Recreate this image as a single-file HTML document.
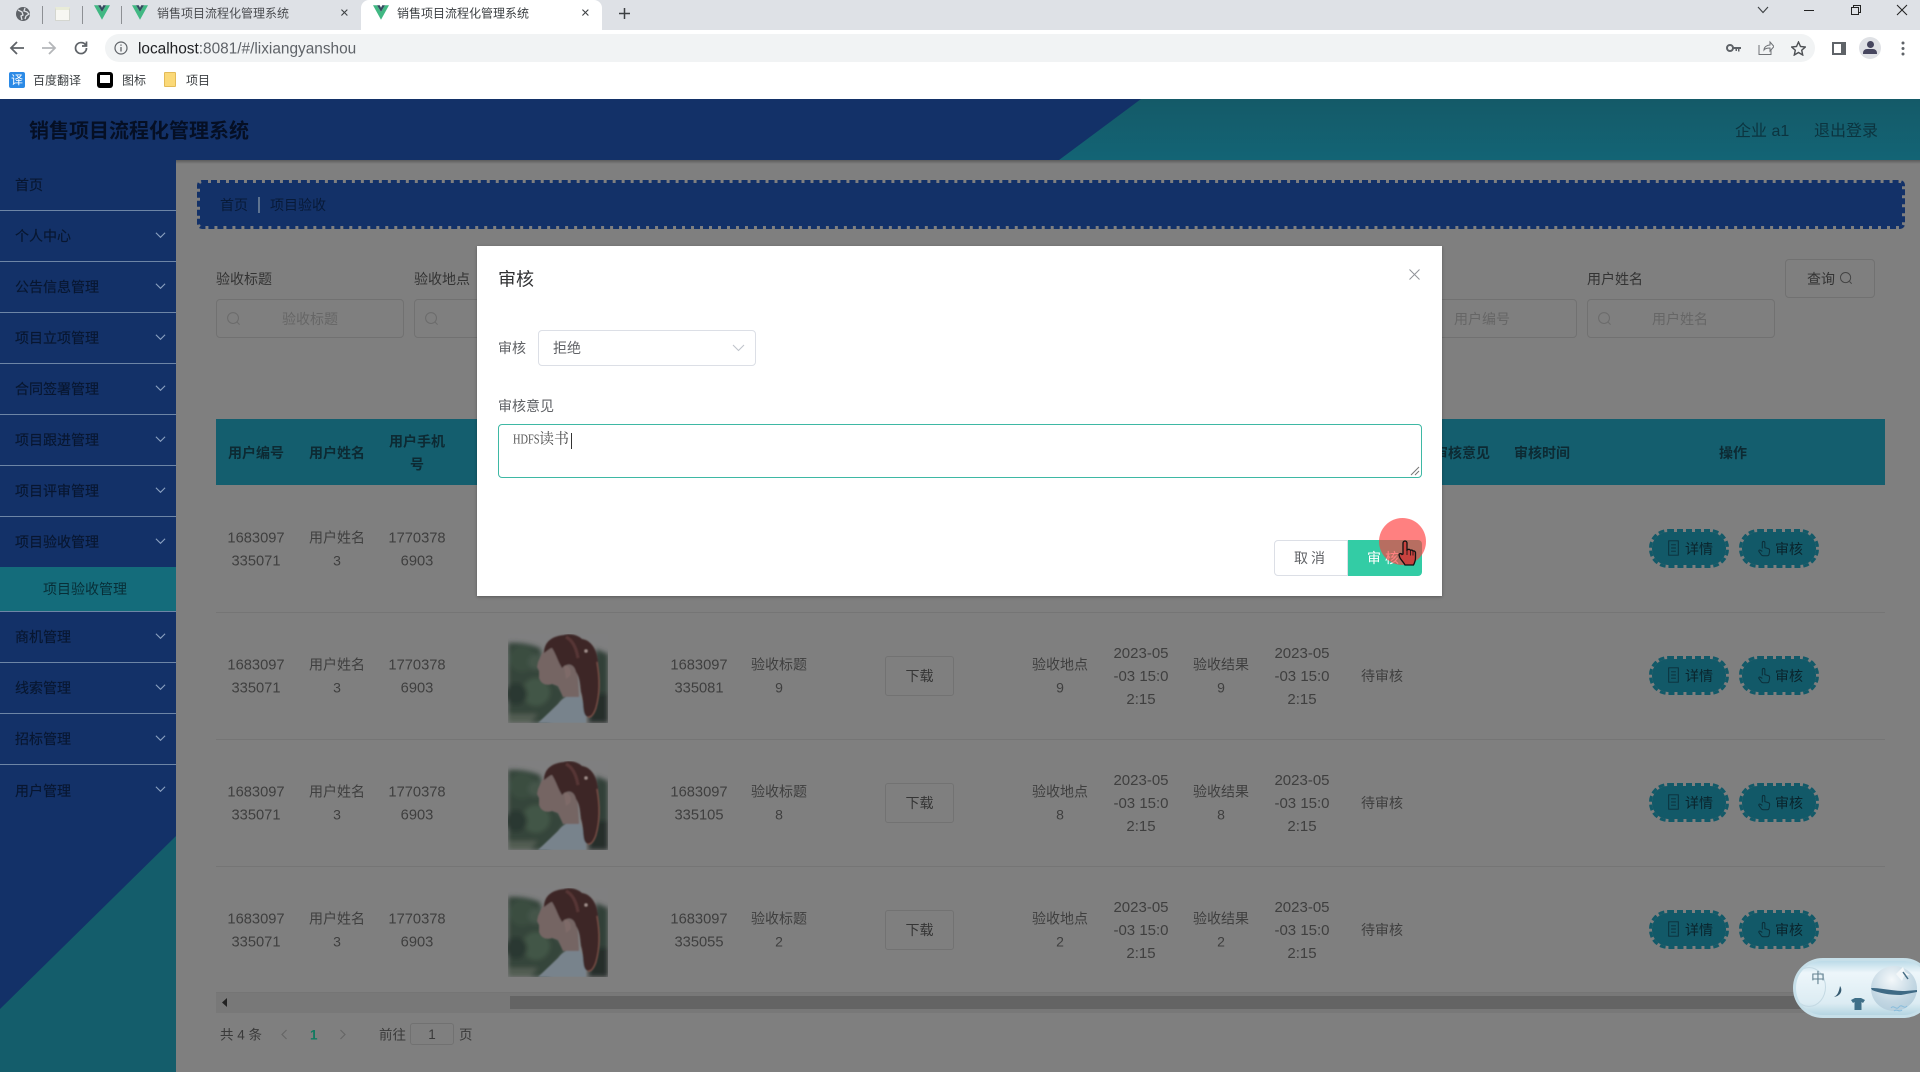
<!DOCTYPE html>
<html lang="zh"><head><meta charset="utf-8"><title>销售项目流程化管理系统</title>
<style>
*{box-sizing:border-box;margin:0;padding:0}
html,body{width:1920px;height:1072px;overflow:hidden;background:#7f7f7f;font-family:"Liberation Sans","Noto Sans CJK SC",sans-serif}
.a{position:absolute}
.t{position:absolute;white-space:nowrap;transform:translateY(calc(-50% + 1.500px));line-height:1.2}
.c{position:absolute;white-space:nowrap;transform:translate(-50%,calc(-50% + 1.500px));text-align:center;line-height:23px;font-size:14.7px;color:#3f3f3f}
.z{font-size:14px;transform:translate(-50%,calc(-50% + .5px))}
.d{font-size:15px;transform:translate(-50%,calc(-50% + .5px))}
.th{font-weight:700;color:#0d2a33;font-size:14px}
.si{position:absolute;left:0;width:176px;height:51px;border-bottom:1px solid #6d85a6}
.si span{position:absolute;left:15px;top:50%;transform:translateY(-50%);font-size:14px;color:#081730;white-space:nowrap;-webkit-text-stroke:.15px #081730}
.si svg{position:absolute;left:155px;top:20px}
.inp{position:absolute;height:39px;border:1px solid #717171;border-radius:4px}
.dl{position:absolute;left:885px;width:69px;height:40px;border:1px solid #727272;border-radius:3px;font-size:14px;color:#353535;text-align:center;line-height:39px}
.btn{position:absolute;width:80px;height:39px;border:3px dashed #125968;border-radius:19px;background:#125968;background-clip:padding-box;color:#0a242c;font-size:14px;line-height:35px;padding-left:33px}
.btn svg{position:absolute;left:15px;top:8px}
.hr{position:absolute;left:216px;width:1669px;height:1px;background:#757575}
</style></head><body>
<svg width="0" height="0" style="position:absolute"><defs>
<symbol id="v" viewBox="0 0 20 18"><path d="M0 0h5l5 8 5-8h5L10 18z" fill="#41b883"/><path d="M5 0h3.500L10 3l1.500-3H15l-5 8z" fill="#34495e"/></symbol>
<symbol id="chev" viewBox="0 0 12 8"><path d="M1 1.500l5 5 5-5" fill="none" stroke="#8aa0c0" stroke-width="1.200"/></symbol>
<symbol id="mag" viewBox="0 0 16 16"><circle cx="7.500" cy="7.500" r="5.800" fill="none" stroke="#6b6b6b" stroke-width="1.100"/><path d="M12 12l2.500 2.500" stroke="#6b6b6b" stroke-width="1.100"/></symbol>
<symbol id="mag2" viewBox="0 0 16 16"><circle cx="7.500" cy="7.500" r="5.800" fill="none" stroke="#444" stroke-width="1.100"/><path d="M12 12l2.500 2.500" stroke="#444" stroke-width="1.100"/></symbol>
<symbol id="doc" viewBox="0 0 16 20"><path d="M2 1h12v18H2zM5 6h6M5 10h6M5 14h6" fill="none" stroke="#0c2f3a" stroke-width="1.200"/></symbol>
<symbol id="hand" viewBox="0 0 16 20"><path d="M6 10V3.200a1.500 1.500 0 013 0V9l4 1.200c1.300.4 1.800 1.400 1.600 2.800l-.6 3.500c-.2 1.200-1 2-2.200 2H7c-1 0-1.800-.5-2.300-1.300L2 13.500c-.6-1 .6-2.200 1.700-1.500L6 13.500" fill="none" stroke="#0c2f3a" stroke-width="1.200"/></symbol>
<filter id="bl" x="-5%" y="-5%" width="110%" height="110%"><feGaussianBlur stdDeviation=".8"/></filter>
<filter id="bl2" x="-10%" y="-10%" width="120%" height="120%"><feGaussianBlur stdDeviation="2.500"/></filter>
<clipPath id="cp"><rect width="100" height="89"/></clipPath>
<symbol id="girl" viewBox="0 0 100 89" preserveAspectRatio="none">
<g clip-path="url(#cp)">
<rect width="100" height="89" fill="#7f7f80"/>
<g filter="url(#bl2)">
<path d="M0 9C10 8 22 10 32 14L40 40 60 60 40 89H0z" fill="#34453a"/>
<circle cx="14" cy="25" r="13" fill="#3a4d40"/><circle cx="28" cy="58" r="14" fill="#435646"/><circle cx="8" cy="60" r="11" fill="#2a3830"/><circle cx="28" cy="28" r="8" fill="#445449"/>
<path d="M0 80H30L22 89H0z" fill="#535d53"/>
<path d="M88 15L100 20V89H80z" fill="#323f38"/>
<path d="M88 60H100V89H80z" fill="#262f2a"/>
</g>
<g filter="url(#bl)">
<path d="M50 70L30 89H78C78 80 76 70 72 62 64 60 56 62 50 70z" fill="#78838c"/>
<path d="M38 14C33 20 32 24 30 28L29 33 31 37 31 44C33 50 38 52 44 50L50 52 55 63 71 63 70 45 68 30 56 10z" fill="#756564"/>
<path d="M36 19C36 8 44 2 56 1 62-1 70 1 74 5 82 6 89 14 90 28 92 44 92 60 88 74 86 80 82 84 78 82 74 78 76 66 73 58 72 50 72 44 68 38 66 30 60 28 54 34 50 28 48 20 44 14 42 14 38 18 36 19z" fill="#3e2625"/>
<path d="M89 28C92 44 92 60 88 74 86 80 83 84 80 83" fill="none" stroke="#7a5046" stroke-width="1.300"/>
<path d="M58 3C64 6 68 12 70 24" stroke="#573634" stroke-width="3" fill="none"/>
<circle cx="78" cy="17" r="1.500" fill="#a89490"/>
<path d="M56 32a5 7 0 016 10l-4 3z" fill="#7e6b68"/>
</g></g>
</symbol></defs></svg>

<!-- browser chrome -->
<div class="a" style="left:0;top:0;width:1920px;height:30px;background:#dee1e6"></div>
<svg class="a" style="left:15px;top:6px" width="16" height="16" viewBox="0 0 16 16"><circle cx="8" cy="8" r="7" fill="#5f6368"/><path d="M3 4l4 2 1 3-2 1 1 4M10 2l-1 3 3 1 2 2-3 2-1 3" fill="none" stroke="#dee1e6" stroke-width="1.300"/></svg>
<div class="a" style="left:42px;top:6px;width:1px;height:18px;background:#8d9094"></div>
<div class="a" style="left:55px;top:7px;width:15px;height:14px;background:#f7f7f2;border:1px solid #d4d6d0;border-top:3px solid #e8ebd8"></div>
<div class="a" style="left:82px;top:6px;width:1px;height:18px;background:#8d9094"></div>
<svg class="a" style="left:94px;top:5px" width="16" height="15"><use href="#v"/></svg>
<div class="a" style="left:121px;top:6px;width:1px;height:18px;background:#8d9094"></div>
<svg class="a" style="left:132px;top:5px" width="16" height="15"><use href="#v"/></svg>
<div class="t" style="left:157px;top:12px;font-size:12px;color:#4a4c50">销售项目流程化管理系统</div>
<div class="t" style="left:340px;top:12px;font-size:15px;color:#3c4043">×</div>
<div class="a" style="left:361px;top:0;width:241px;height:30px;background:#fff;border-radius:8px 8px 0 0"></div>
<svg class="a" style="left:373px;top:5px" width="16" height="15"><use href="#v"/></svg>
<div class="t" style="left:397px;top:12px;font-size:12px;color:#3c4043">销售项目流程化管理系统</div>
<div class="t" style="left:581px;top:12px;font-size:15px;color:#3c4043">×</div>
<svg class="a" style="left:618px;top:7px" width="13" height="13"><path d="M6.500 1v11M1 6.500h11" stroke="#3c4043" stroke-width="1.500"/></svg>
<svg class="a" style="left:1756px;top:5px" width="14" height="10"><path d="M2 2l5 5.500L12 2" fill="none" stroke="#3c4043" stroke-width="1.100"/></svg>
<div class="a" style="left:1804px;top:10px;width:10px;height:1px;background:#222"></div>
<svg class="a" style="left:1850px;top:4px" width="12" height="12"><path d="M1.500 3.500h7v7h-7zM3.500 3.500v-2h7v7h-2" fill="none" stroke="#222" stroke-width="1"/></svg>
<svg class="a" style="left:1896px;top:4px" width="12" height="12"><path d="M1 1l10 10M11 1L1 11" stroke="#222" stroke-width="1"/></svg>

<div class="a" style="left:0;top:30px;width:1920px;height:69px;background:#fff"></div>
<svg class="a" style="left:9px;top:40px" width="16" height="16"><path d="M15 8H2M8 2L2 8l6 6" fill="none" stroke="#5f6368" stroke-width="1.800"/></svg>
<svg class="a" style="left:41px;top:40px" width="16" height="16"><path d="M1 8h13M8 2l6 6-6 6" fill="none" stroke="#b4b6b9" stroke-width="1.800"/></svg>
<svg class="a" style="left:73px;top:40px" width="16" height="16"><path d="M13.500 8A5.500 5.500 0 118.500 2.600c2 0 3.200 1 4.500 2.400M13.500 1.500V6H9" fill="none" stroke="#5f6368" stroke-width="1.700"/></svg>
<div class="a" style="left:105px;top:34px;width:1710px;height:28px;background:#f1f3f4;border-radius:14px"></div>
<svg class="a" style="left:114px;top:41px" width="14" height="14"><circle cx="7" cy="7" r="6" fill="none" stroke="#5f6368" stroke-width="1.200"/><path d="M7 6v4.500M7 3.500v1.300" stroke="#5f6368" stroke-width="1.300"/></svg>
<div class="t" style="left:138px;top:47.500px;font-size:15.400px;color:#202124">localhost<span style="color:#5f6368">:8081/#/lixiangyanshou</span></div>
<svg class="a" style="left:1726px;top:43px" width="15" height="10"><circle cx="4" cy="5" r="3" fill="none" stroke="#5f6368" stroke-width="2"/><path d="M7 4h8v2h-1.500v2.500H12V6h-1v2H9.500V6H7z" fill="#5f6368"/></svg>
<svg class="a" style="left:1758px;top:40px" width="16" height="16"><path d="M1 5v9.500h12V10M6 10c0-3 3-5 6-5V2l4 4.500L12 11V8c-2.500 0-5 .5-6 2z" fill="none" stroke="#6f7276" stroke-width="1"/></svg>
<svg class="a" style="left:1791px;top:41px" width="15" height="15"><path d="M7.500 1l2 4.500 4.800.5-3.600 3.200 1 4.800-4.200-2.500-4.200 2.500 1-4.800L.7 6l4.800-.5z" fill="none" stroke="#4d5054" stroke-width="1.400"/></svg>
<div class="a" style="left:1832px;top:42px;width:14px;height:13px;border:2px solid #5f6368;border-right-width:5px"></div>
<div class="a" style="left:1859px;top:37px;width:22px;height:22px;border-radius:50%;background:#dfe1e5;overflow:hidden"><div class="a" style="left:7.500px;top:4px;width:7px;height:7px;border-radius:50%;background:#46465e"></div><div class="a" style="left:4px;top:12px;width:14px;height:5px;border-radius:4px 4px 0 0;background:#46465e"></div></div>
<svg class="a" style="left:1901px;top:41px" width="4" height="15"><circle cx="2" cy="2" r="1.500" fill="#5f6368"/><circle cx="2" cy="7.500" r="1.500" fill="#5f6368"/><circle cx="2" cy="13" r="1.500" fill="#5f6368"/></svg>

<div class="a" style="left:9px;top:72px;width:16px;height:16px;background:#2b8ae6;border-radius:2px;color:#fff;font-size:12px;line-height:16px;text-align:center">译</div>
<div class="t" style="left:33px;top:78.500px;font-size:12px;color:#3c4043">百度翻译</div>
<div class="a" style="left:97px;top:72px;width:16px;height:16px;background:#000;border-radius:3px"><div class="a" style="left:3px;top:3px;width:10px;height:8px;background:#fff"></div></div>
<div class="t" style="left:122px;top:78.500px;font-size:12px;color:#3c4043">图标</div>
<div class="a" style="left:164px;top:72px;width:12px;height:15px;background:#fbd978;border:1px solid #e3bb58;border-radius:1px"></div>
<div class="t" style="left:186px;top:78.500px;font-size:12px;color:#3c4043">项目</div>

<!-- header -->
<div class="a" style="left:0;top:99px;width:1920px;height:61px;background:linear-gradient(#145a68,#136475)"></div>
<svg class="a" style="left:0;top:99px" width="1150" height="61"><path d="M0 0H1141L1059 61H0z" fill="#133168"/></svg>
<div class="a" style="left:0;top:160px;width:1920px;height:4px;background:linear-gradient(#5c5c5c,#7f7f7f)"></div>
<div class="t" style="left:29px;top:129.500px;font-size:20px;font-weight:700;color:#050f24">销售项目流程化管理系统</div>
<div class="t" style="left:1735px;top:129.500px;font-size:16px;color:#0c343f">企业 a1</div>
<div class="t" style="left:1814px;top:129.500px;font-size:16px;color:#0c343f">退出登录</div>

<!-- sidebar -->
<div class="a" style="left:0;top:160px;width:176px;height:912px;background:#133168"></div>
<svg class="a" style="left:0;top:836px" width="176" height="236"><path d="M176 0V236H0V173z" fill="#145d6b"/></svg>
<div class="si" style="top:160px"><span>首页</span></div>
<div class="si" style="top:211px"><span>个人中心</span><svg width="11" height="8"><use href="#chev"/></svg></div>
<div class="si" style="top:262px"><span>公告信息管理</span><svg width="11" height="8"><use href="#chev"/></svg></div>
<div class="si" style="top:313px"><span>项目立项管理</span><svg width="11" height="8"><use href="#chev"/></svg></div>
<div class="si" style="top:364px"><span>合同签署管理</span><svg width="11" height="8"><use href="#chev"/></svg></div>
<div class="si" style="top:415px"><span>项目跟进管理</span><svg width="11" height="8"><use href="#chev"/></svg></div>
<div class="si" style="top:466px"><span>项目评审管理</span><svg width="11" height="8"><use href="#chev"/></svg></div>
<div class="si" style="top:517px;border-bottom:0;height:50px"><span>项目验收管理</span><svg width="11" height="8"><use href="#chev"/></svg></div>
<div class="a" style="left:0;top:567px;width:176px;height:45px;background:#146c7b;border-bottom:1px solid #6d85a6"></div>
<div class="t" style="left:43px;top:587.500px;font-size:14px;color:#082e37">项目验收管理</div>
<div class="si" style="top:612px"><span>商机管理</span><svg width="11" height="8"><use href="#chev"/></svg></div>
<div class="si" style="top:663px"><span>线索管理</span><svg width="11" height="8"><use href="#chev"/></svg></div>
<div class="si" style="top:714px"><span>招标管理</span><svg width="11" height="8"><use href="#chev"/></svg></div>
<div class="si" style="top:765px;border-bottom:0"><span>用户管理</span><svg width="11" height="8"><use href="#chev"/></svg></div>

<!-- breadcrumb -->
<div class="a" style="left:197px;top:180px;width:1708px;height:49px;border:3px dashed #133168;border-radius:5px;background:#133168;background-clip:padding-box"></div>
<div class="t" style="left:220px;top:203.500px;font-size:14px;color:#081a38">首页</div>
<div class="a" style="left:258px;top:197px;width:2px;height:16px;background:#5e7390"></div>
<div class="t" style="left:270px;top:203.500px;font-size:14px;color:#081a38">项目验收</div>

<!-- search -->
<div class="t" style="left:216px;top:278px;font-size:14px;color:#333">验收标题</div>
<div class="inp" style="left:216px;top:299px;width:188px"></div>
<svg class="a" style="left:226px;top:311px" width="15" height="15"><use href="#mag"/></svg>
<div class="c" style="left:310px;top:318px;color:#666;font-size:14px">验收标题</div>
<div class="t" style="left:414px;top:278px;font-size:14px;color:#333">验收地点</div>
<div class="inp" style="left:414px;top:299px;width:188px"></div>
<svg class="a" style="left:424px;top:311px" width="15" height="15"><use href="#mag"/></svg>
<div class="inp" style="left:1388px;top:299px;width:189px"></div>
<div class="c" style="left:1482px;top:318px;color:#666;font-size:14px">用户编号</div>
<div class="t" style="left:1587px;top:278px;font-size:14px;color:#333">用户姓名</div>
<div class="inp" style="left:1587px;top:299px;width:188px"></div>
<svg class="a" style="left:1597px;top:311px" width="15" height="15"><use href="#mag"/></svg>
<div class="c" style="left:1680px;top:318px;color:#666;font-size:14px">用户姓名</div>
<div class="a" style="left:1785px;top:259px;width:90px;height:39px;border:1px solid #717171;border-radius:4px"></div>
<div class="t" style="left:1807px;top:278px;font-size:14px;color:#333">查询</div>
<svg class="a" style="left:1839px;top:271px" width="14" height="14"><use href="#mag2"/></svg>

<!-- table -->
<div class="a" style="left:216px;top:419px;width:1669px;height:66px;background:#145e6e"></div>
<div class="c th" style="left:256px;top:452px">用户编号</div>
<div class="c th" style="left:337px;top:452px">用户姓名</div>
<div class="c th" style="left:417px;top:452px">用户手机<br>号</div>
<div class="c th" style="left:1462px;top:452px">审核意见</div>
<div class="c th" style="left:1542px;top:452px">审核时间</div>
<div class="c th" style="left:1733px;top:452px">操作</div>
<div class="hr" style="top:612px"></div><div class="hr" style="top:739px"></div><div class="hr" style="top:866px"></div><div class="hr" style="top:992px"></div>

<!-- row 1 -->
<div class="c" style="left:256px;top:549px">1683097<br>335071</div><div class="c z" style="left:337px;top:549px">用户姓名<br>3</div><div class="c" style="left:417px;top:549px">1770378<br>6903</div>
<div class="btn" style="left:1649px;top:529px"><svg width="13" height="16"><use href="#doc"/></svg>详情</div><div class="btn" style="left:1739px;top:529px"><svg width="14" height="17"><use href="#hand"/></svg>审核</div>

<!-- row 2 -->
<div class="c" style="left:256px;top:676px">1683097<br>335071</div><div class="c z" style="left:337px;top:676px">用户姓名<br>3</div><div class="c" style="left:417px;top:676px">1770378<br>6903</div>
<svg class="a" style="left:508px;top:634px" width="100" height="89"><use href="#girl"/></svg>
<div class="c" style="left:699px;top:676px">1683097<br>335081</div><div class="c z" style="left:779px;top:676px">验收标题<br>9</div>
<div class="dl" style="top:656px">下载</div>
<div class="c z" style="left:1060px;top:676px">验收地点<br>9</div><div class="c d" style="left:1141px;top:676px">2023-05<br>-03 15:0<br>2:15</div><div class="c z" style="left:1221px;top:676px">验收结果<br>9</div><div class="c d" style="left:1302px;top:676px">2023-05<br>-03 15:0<br>2:15</div><div class="c z" style="left:1382px;top:676px">待审核</div>
<div class="btn" style="left:1649px;top:656px"><svg width="13" height="16"><use href="#doc"/></svg>详情</div><div class="btn" style="left:1739px;top:656px"><svg width="14" height="17"><use href="#hand"/></svg>审核</div>

<!-- row 3 -->
<div class="c" style="left:256px;top:803px">1683097<br>335071</div><div class="c z" style="left:337px;top:803px">用户姓名<br>3</div><div class="c" style="left:417px;top:803px">1770378<br>6903</div>
<svg class="a" style="left:508px;top:761px" width="100" height="89"><use href="#girl"/></svg>
<div class="c" style="left:699px;top:803px">1683097<br>335105</div><div class="c z" style="left:779px;top:803px">验收标题<br>8</div>
<div class="dl" style="top:783px">下载</div>
<div class="c z" style="left:1060px;top:803px">验收地点<br>8</div><div class="c d" style="left:1141px;top:803px">2023-05<br>-03 15:0<br>2:15</div><div class="c z" style="left:1221px;top:803px">验收结果<br>8</div><div class="c d" style="left:1302px;top:803px">2023-05<br>-03 15:0<br>2:15</div><div class="c z" style="left:1382px;top:803px">待审核</div>
<div class="btn" style="left:1649px;top:783px"><svg width="13" height="16"><use href="#doc"/></svg>详情</div><div class="btn" style="left:1739px;top:783px"><svg width="14" height="17"><use href="#hand"/></svg>审核</div>

<!-- row 4 -->
<div class="c" style="left:256px;top:930px">1683097<br>335071</div><div class="c z" style="left:337px;top:930px">用户姓名<br>3</div><div class="c" style="left:417px;top:930px">1770378<br>6903</div>
<svg class="a" style="left:508px;top:888px" width="100" height="89"><use href="#girl"/></svg>
<div class="c" style="left:699px;top:930px">1683097<br>335055</div><div class="c z" style="left:779px;top:930px">验收标题<br>2</div>
<div class="dl" style="top:910px">下载</div>
<div class="c z" style="left:1060px;top:930px">验收地点<br>2</div><div class="c d" style="left:1141px;top:930px">2023-05<br>-03 15:0<br>2:15</div><div class="c z" style="left:1221px;top:930px">验收结果<br>2</div><div class="c d" style="left:1302px;top:930px">2023-05<br>-03 15:0<br>2:15</div><div class="c z" style="left:1382px;top:930px">待审核</div>
<div class="btn" style="left:1649px;top:910px"><svg width="13" height="16"><use href="#doc"/></svg>详情</div><div class="btn" style="left:1739px;top:910px"><svg width="14" height="17"><use href="#hand"/></svg>审核</div>

<!-- scrollbar -->
<div class="a" style="left:216px;top:993px;width:1669px;height:20px;background:#787878"></div>
<div class="a" style="left:510px;top:996px;width:1375px;height:13px;background:#646464"></div>
<svg class="a" style="left:222px;top:998px" width="6" height="9"><path d="M5 0v9L0 4.500z" fill="#222"/></svg>

<!-- pagination -->
<div class="t" style="left:220px;top:1033.500px;font-size:13.500px;color:#3a3a3a">共 4 条</div>
<svg class="a" style="left:280px;top:1029px" width="8" height="11"><path d="M6.500 1L2 5.500 6.500 10" fill="none" stroke="#666" stroke-width="1.200"/></svg>
<div class="t" style="left:310px;top:1034px;font-size:13.500px;font-weight:700;color:#127a60">1</div>
<svg class="a" style="left:339px;top:1029px" width="8" height="11"><path d="M1.500 1L6 5.500 1.500 10" fill="none" stroke="#666" stroke-width="1.200"/></svg>
<div class="t" style="left:379px;top:1033.500px;font-size:13.500px;color:#3a3a3a">前往</div>
<div class="a" style="left:410px;top:1023px;width:44px;height:22px;border:1px solid #717171;border-radius:3px;font-size:13.500px;line-height:22px;text-align:center;color:#3a3a3a">1</div>
<div class="t" style="left:459px;top:1033.500px;font-size:13.500px;color:#3a3a3a">页</div>

<!-- IME widget -->
<div class="a" style="left:1793px;top:958px;width:140px;height:60px;border-radius:30px;background:linear-gradient(#bcdbe8,#edf6fa 22%,#dcecf3 78%,#b5d5e2);border:3px solid #c6dfe9;overflow:hidden">
<div class="a" style="left:-4px;top:6px;width:34px;height:40px;border:1px solid #c4d9e3;border-radius:50%"></div>
<div class="a" style="left:75px;top:5px;width:46px;height:45px;border-radius:50%;background:radial-gradient(circle at 45% 30%,#f4f8fa,#c3d7e3 55%,#a9c6d6)"></div>
<svg class="a" style="left:75px;top:26px" width="46" height="10"><path d="M0 1C12 1 20 4 34 4L46 3V5L30 8C18 8 8 6 1 3z" fill="#3f6a85"/></svg>
<svg class="a" style="left:98px;top:5px" width="18" height="16"><path d="M2 8L9 1l2 5 5 3-6 1-2 5z" fill="#f3f7f9"/><path d="M9 6l5 7" stroke="#476d84" stroke-width="1.500"/></svg>
<svg class="a" style="left:94px;top:42px" width="22" height="10"><path d="M1 5c3-4 5 3 8-1s5 3 8-1M4 8c3-3 5 2 8-1" fill="none" stroke="#87bcdc" stroke-width="1"/></svg>
</div>
<div class="t" style="left:1811px;top:977px;font-size:14px;color:#62808f">中</div>
<svg class="a" style="left:1833px;top:986px" width="10" height="12"><path d="M7 0C10 4 8 10 1 11c4-2 5-6 6-11z" fill="#355a70"/></svg>
<svg class="a" style="left:1851px;top:998px" width="14" height="12"><path d="M0 2l4-2h6l4 2-2 3-1.500-1V12H3.500V4L2 5z" fill="#3f6f88"/></svg>

<!-- dialog -->
<div class="a" style="left:477px;top:246px;width:965px;height:350px;background:#fff;box-shadow:0 1px 3px rgba(0,0,0,.3)"></div>
<div class="t" style="left:498px;top:279px;font-size:18px;color:#303133">审核</div>
<svg class="a" style="left:1409px;top:269px" width="11" height="11"><path d="M.5.5l10 10M10.500.5l-10 10" stroke="#909399" stroke-width="1"/></svg>
<div class="t" style="left:498px;top:347px;font-size:14px;color:#606266">审核</div>
<div class="a" style="left:538px;top:330px;width:218px;height:36px;border:1px solid #dcdfe6;border-radius:4px"></div>
<div class="t" style="left:553px;top:347px;font-size:14px;color:#606266">拒绝</div>
<svg class="a" style="left:732px;top:344px" width="13" height="8"><path d="M1 1l5.500 5.500L12 1" fill="none" stroke="#c0c4cc" stroke-width="1.100"/></svg>
<div class="t" style="left:498px;top:405px;font-size:14px;color:#606266">审核意见</div>
<div class="a" style="left:498px;top:424px;width:924px;height:54px;border:1.500px solid #3eb8a4;border-radius:4px"></div>
<div class="t" style="left:513px;top:438px;font-size:14px;color:#555;font-family:'Liberation Serif','Noto Serif CJK SC',serif"><span style="display:inline-block;width:26px;transform:scaleX(.74);transform-origin:left">HDFS</span><span style="font-size:15px;font-family:'Noto Serif CJK SC',serif">读书</span></div>
<div class="a" style="left:571px;top:433px;width:1px;height:16px;background:#333"></div>
<svg class="a" style="left:1410px;top:466px" width="10" height="10"><path d="M9 1L1 9M9 5L5 9" stroke="#777" stroke-width="1"/></svg>
<div class="a" style="left:1274px;top:540px;width:74px;height:36px;border:1px solid #dcdfe6;border-radius:4px 0 0 4px;font-size:14px;line-height:35px;text-align:center;color:#606266;letter-spacing:3px">取消</div>
<div class="a" style="left:1348px;top:540px;width:74px;height:36px;background:#33cca5;border-radius:0 4px 4px 0;font-size:14px;line-height:36px;text-align:center;color:#fff;letter-spacing:4px">审核</div>

<!-- pointer highlight -->
<div class="a" style="left:1379px;top:518px;width:47px;height:47px;border-radius:50%;background:rgba(255,60,60,.65)"></div>
<svg class="a" style="left:1398px;top:540px" width="19" height="27" viewBox="0 0 19 27"><path d="M5 14V3a2 2 0 014 0v7l1-.5a2 2 0 012.500.8 2 2 0 012.500.7 2 2 0 012.500 1.500V18c0 3-1 5-2 7H7c-1-2-3-4-5-7l-1-3c0-1.500 2-2 3-.500z" fill="#c9423f" stroke="#111" stroke-width="1.300"/><path d="M9 10v5M12.500 10.500v5M15 11.500v4" stroke="#111" stroke-width=".8"/></svg>
</body></html>
